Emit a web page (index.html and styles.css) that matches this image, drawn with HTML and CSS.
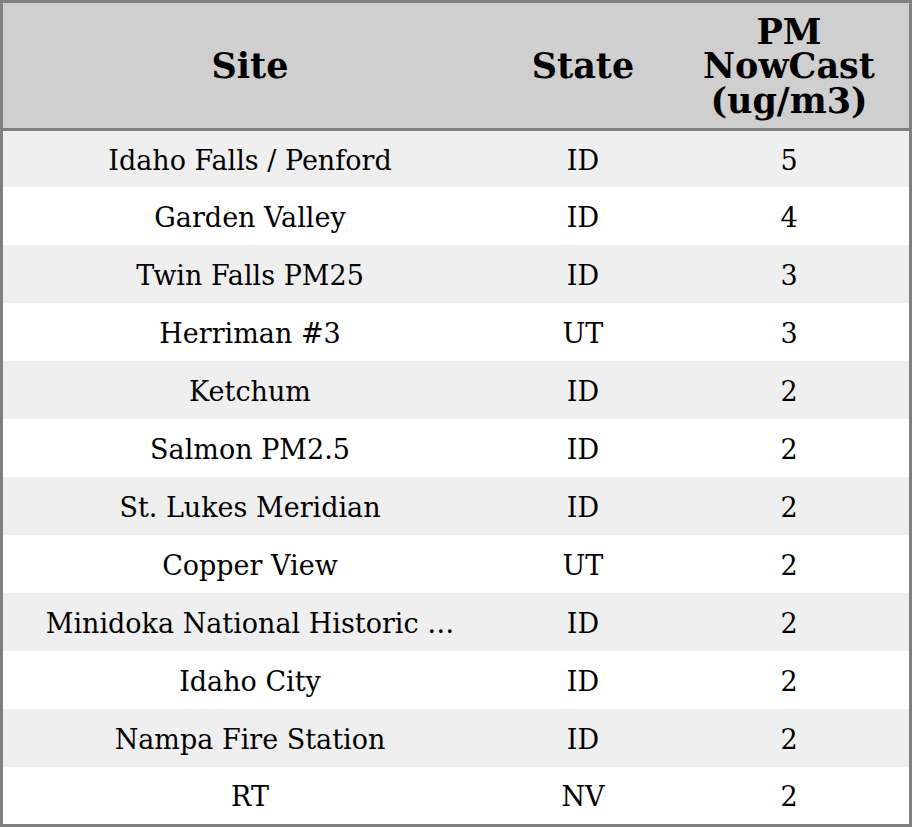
FILE: index.html
```html
<!DOCTYPE html>
<html>
<head>
<meta charset="utf-8">
<link rel="stylesheet" href="styles.css">
</head>
<body>
<table class="aq">
  <colgroup>
    <col class="c-site">
    <col class="c-state">
    <col class="c-pm">
  </colgroup>
  <thead>
    <tr><th>Site</th><th>State</th><th>PM<br>NowCast<br>(ug/m3)</th></tr>
  </thead>
  <tbody>
    <tr><td>Idaho Falls / Penford</td><td>ID</td><td>5</td></tr>
    <tr><td>Garden Valley</td><td>ID</td><td>4</td></tr>
    <tr><td>Twin Falls PM25</td><td>ID</td><td>3</td></tr>
    <tr><td>Herriman #3</td><td>UT</td><td>3</td></tr>
    <tr><td>Ketchum</td><td>ID</td><td>2</td></tr>
    <tr><td>Salmon PM2.5</td><td>ID</td><td>2</td></tr>
    <tr><td>St. Lukes Meridian</td><td>ID</td><td>2</td></tr>
    <tr><td>Copper View</td><td>UT</td><td>2</td></tr>
    <tr><td>Minidoka National Historic …</td><td>ID</td><td>2</td></tr>
    <tr><td>Idaho City</td><td>ID</td><td>2</td></tr>
    <tr><td>Nampa Fire Station</td><td>ID</td><td>2</td></tr>
    <tr><td>RT</td><td>NV</td><td>2</td></tr>
  </tbody>
</table>
</body>
</html>
```

FILE: styles.css
```css
html, body {
  margin: 0;
  padding: 0;
  background: #ffffff;
}
.aq {
  width: 912px;
  border-collapse: separate;
  border-spacing: 0;
  border: 3px solid #808080;
  table-layout: fixed;
  font-family: "DejaVu Serif", serif;
  color: #000;
}
.c-site { width: 494px; }
.c-state { width: 172px; }
.c-pm { width: 240px; }
.aq th {
  box-sizing: border-box;
  background: #cfcfcf;
  font-size: 35px;
  font-weight: bold;
  line-height: 34.5px;
  height: 128px;
  padding: 2px 0 0 0;
  text-align: center;
  vertical-align: middle;
  border-bottom: 3px solid #808080;
}
.aq td {
  box-sizing: border-box;
  font-size: 27px;
  line-height: 30px;
  height: 58px;
  padding: 3px 0 0 0;
  text-align: center;
  vertical-align: middle;
  white-space: nowrap;
}
.aq tbody tr:first-child td { height: 56px; }
.aq tbody tr:last-child td { height: 57px; }
.aq tbody tr:nth-child(odd) td { background: #efefef; }
.aq tbody tr:nth-child(even) td { background: #ffffff; }
```
